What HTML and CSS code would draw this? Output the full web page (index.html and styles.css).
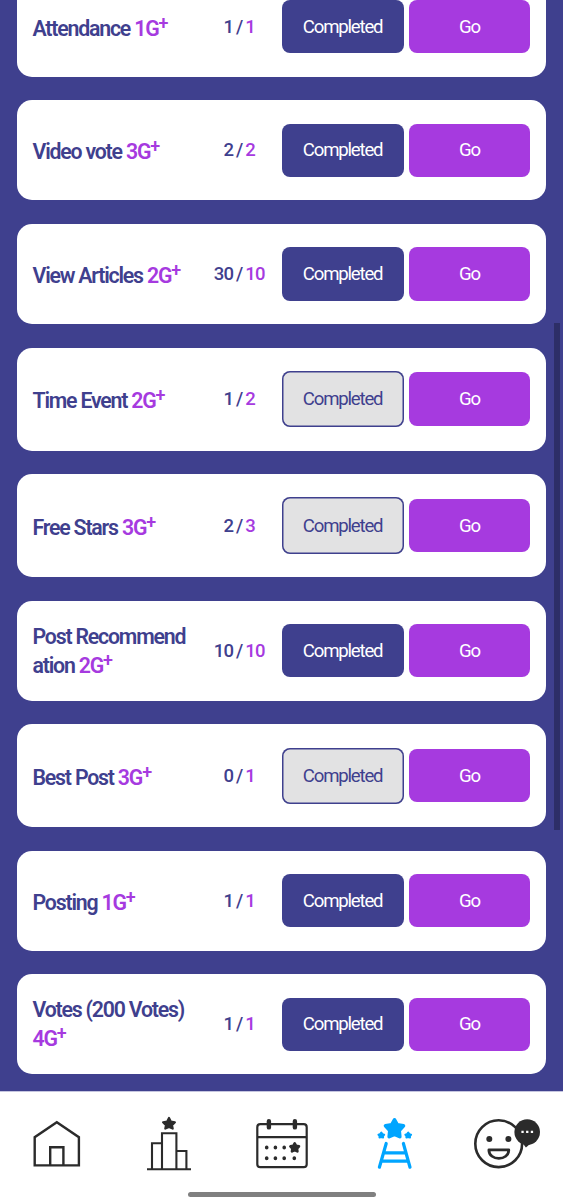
FILE: index.html
```html
<!DOCTYPE html>
<html lang="en">
<head>
    <meta charset="UTF-8">
    <meta name="viewport" content="width=device-width, initial-scale=1.0">
    <title>Missions</title>
    <link rel="stylesheet" href="styles.css">
</head>
<body>
    <main class="missions">
        <div class="card">
            <div class="title">Attendance <span class="point">1G<sup>+</sup></span></div>
            <div class="count">1 / <span class="point">1</span></div>
            <button class="button done">Completed</button>
            <button class="button go">Go</button>
        </div>
        <div class="card">
            <div class="title">Video vote <span class="point">3G<sup>+</sup></span></div>
            <div class="count">2 / <span class="point">2</span></div>
            <button class="button done">Completed</button>
            <button class="button go">Go</button>
        </div>
        <div class="card">
            <div class="title">View Articles <span class="point">2G<sup>+</sup></span></div>
            <div class="count">30 / <span class="point">10</span></div>
            <button class="button done">Completed</button>
            <button class="button go">Go</button>
        </div>
        <div class="card">
            <div class="title">Time Event <span class="point">2G<sup>+</sup></span></div>
            <div class="count">1 / <span class="point">2</span></div>
            <button class="button pending">Completed</button>
            <button class="button go">Go</button>
        </div>
        <div class="card">
            <div class="title">Free Stars <span class="point">3G<sup>+</sup></span></div>
            <div class="count">2 / <span class="point">3</span></div>
            <button class="button pending">Completed</button>
            <button class="button go">Go</button>
        </div>
        <div class="card">
            <div class="title wrapped">Post Recommend<br>ation <span class="point">2G<sup>+</sup></span></div>
            <div class="count">10 / <span class="point">10</span></div>
            <button class="button done">Completed</button>
            <button class="button go">Go</button>
        </div>
        <div class="card">
            <div class="title">Best Post <span class="point">3G<sup>+</sup></span></div>
            <div class="count">0 / <span class="point">1</span></div>
            <button class="button pending">Completed</button>
            <button class="button go">Go</button>
        </div>
        <div class="card">
            <div class="title">Posting <span class="point">1G<sup>+</sup></span></div>
            <div class="count">1 / <span class="point">1</span></div>
            <button class="button done">Completed</button>
            <button class="button go">Go</button>
        </div>
        <div class="card">
            <div class="title wrapped">Votes (200 Votes)<br><span class="point">4G<sup>+</sup></span></div>
            <div class="count">1 / <span class="point">1</span></div>
            <button class="button done">Completed</button>
            <button class="button go">Go</button>
        </div>
    </main>
    <div class="scrollbar"></div>

    <nav class="tabbar">
        <div class="tabs">
            <a class="tab">
                <svg width="80" height="60" viewBox="17 1112 80 60" fill="none" stroke="#2b2b2b" stroke-width="2.4">
                    <path d="M34.7 1165.4V1137.2L56.8 1122.3L78.9 1137.2V1165.4Z"/>
                    <path d="M50.2 1165V1147.2H63.4V1165"/>
                </svg>
            </a>
            <a class="tab">
                <svg width="80" height="60" viewBox="130 1112 80 60" fill="none" stroke="#2b2b2b" stroke-width="2.1">
                    <path d="M147 1169.3H191M152 1169V1143.2H162M162 1169V1133.2H176.4V1169M176.4 1151H186.4V1169"/>
                    <path class="star" stroke-width="2.2" d="M169 1118L170.9 1121.7L174.9 1122.3L172 1125.2L172.7 1128.6L169 1127.1L165.3 1128.6L166 1125.2L163.1 1122.3L167.1 1121.7Z"/>
                </svg>
            </a>
            <a class="tab">
                <svg width="80" height="60" viewBox="242 1112 80 60" fill="none" stroke="#2b2b2b" stroke-width="2.2">
                    <rect x="257.3" y="1124.2" width="49.4" height="43" rx="3"/>
                    <path d="M257 1137.1H307"/>
                    <path stroke-width="4.4" stroke-linecap="round" d="M268.9 1121.2V1127.4M294.9 1121.2V1127.4"/>
                    <path stroke-width="3.6" stroke-linecap="round" d="M266.7 1147.4v.4M275.4 1147.4v.4M284.2 1147.4v.4M266.7 1158v.4M275.4 1158v.4M284.2 1158v.4M294.3 1158v.4"/>
                    <path class="star" stroke-width="2.6" d="M294.7 1143.3L296.1 1145.9L299 1146.4L297 1148.5L297.4 1151.4L294.7 1150.1L292 1151.4L292.4 1148.5L290.4 1146.4L293.3 1145.9Z"/>
                </svg>
            </a>
            <a class="tab active">
                <svg width="80" height="60" viewBox="355 1112 80 60" fill="none" stroke="#00a5ff" stroke-width="3.2">
                    <path stroke-linecap="round" d="M386.2 1143.5L379.4 1167.2M403.4 1143.5L410 1167.2M384.5 1152.9H405M382 1161.2H407.5"/>
                    <path class="star" stroke-width="3.6" d="M394.5 1119.8L397.3 1124.9L403.5 1125.8L399.2 1130.5L399.8 1136.7L394.5 1134.4L389.2 1136.7L389.8 1130.5L385.5 1125.8L391.7 1124.9Z"/>
                    <path class="star" stroke-width="2" d="M381.3 1132.6L382.5 1134.2L384.2 1134.7L383 1136.2L383.1 1137.6L381.3 1137.1L379.5 1137.6L379.6 1136.2L378.4 1134.7L380.1 1134.2Z"/>
                    <path class="star" stroke-width="2" d="M408.2 1132.6L409.4 1134.2L411.1 1134.7L409.9 1136.2L410 1137.6L408.2 1137.1L406.4 1137.6L406.5 1136.2L405.3 1134.7L407 1134.2Z"/>
                </svg>
            </a>
            <a class="tab">
                <svg width="80" height="60" viewBox="467 1112 80 60" fill="none" stroke="#2b2b2b" stroke-width="2.6">
                    <circle cx="498.7" cy="1143.7" r="23.4"/>
                    <circle cx="489.3" cy="1138.9" r="3" fill="#2b2b2b" stroke="none"/>
                    <circle cx="508.4" cy="1138.9" r="3" fill="#2b2b2b" stroke="none"/>
                    <path stroke-width="2.8" stroke-linejoin="round" d="M488.9 1149.9H508.8C508.8 1161.2 488.9 1161.2 488.9 1149.9Z"/>
                    <path fill="#2b2b2b" stroke="none" d="M522.5 1143L525.9 1147.4L531.2 1143Z"/>
                    <circle cx="527.2" cy="1132.1" r="12.8" fill="#2b2b2b" stroke="none"/>
                    <path stroke="#fff" stroke-dasharray="2.3 2.4" stroke-width="2.2" d="M521.4 1131.9H533.4"/>
                </svg>
            </a>
        </div>
        <div class="home-bar"></div>
    </nav>
</body>
</html>
```

FILE: styles.css
```css
* {
    box-sizing: border-box;
}
body {
    display: flex;
    flex-direction: column;
    height: 1200px;
    margin: 0;
    overflow: hidden;
    background-color: #3f408e;
    color: #3f408e;
    font-family: Roboto, 'Liberation Sans', sans-serif;
}
.missions {
    display: flex;
    flex-direction: column;
    justify-content: flex-end;
    gap: 23.6px;
    height: 1091px;
    padding: 0 17px 16.7px;
    overflow: hidden;
}
.card {
    display: flex;
    flex-shrink: 0;
    align-items: center;
    padding: 23.4px 15.6px 23.4px 15.5px;
    border-radius: 15px;
    background-color: #fff;
}
.title {
    width: 164.4px;
    margin: -4px 0;
    padding-top: 3px;
    font-size: 21.3px;
    font-weight: 600;
    line-height: 29px;
    letter-spacing: -1.2px;
    white-space: nowrap;
}
.title.wrapped {
    padding-top: 0;
}
.title sup {
    position: relative;
    top: -7px;
    font-size: 18px;
    line-height: 0;
    vertical-align: baseline;
}
.count {
    width: 85px;
    font-size: 18.5px;
    font-weight: 500;
    letter-spacing: -0.8px;
    word-spacing: -1px;
    text-align: center;
}
.point {
    color: #a63adf;
}
.button {
    width: 122px;
    height: 53.2px;
    padding: 0;
    border: none;
    border-radius: 8px;
    color: #fff;
    font-family: inherit;
    font-size: 18.6px;
    letter-spacing: -1.2px;
}
.button.done {
    background-color: #3f408e;
}
.button.pending {
    height: 56.2px;
    background-color: #e2e2e3;
    box-shadow: inset 0 0 0 1.5px #3f408e;
    color: #3f408e;
}
.button.go {
    margin-left: 5px;
    background-color: #a63adf;
}
.scrollbar {
    position: absolute;
    top: 323px;
    right: 3px;
    width: 6px;
    height: 507px;
    background-color: #2d2e67;
}
.tabbar {
    flex: 1;
    border-top: 1px solid #c5c5df;
    background-color: #fff;
}
.tabs {
    display: flex;
    justify-content: space-between;
    padding: 20px 16px 0 17px;
}
.tab svg {
    display: block;
}
.star {
    fill: #2b2b2b;
    stroke-linejoin: round;
}
.active .star {
    fill: #00a5ff;
}
.home-bar {
    width: 188px;
    height: 5px;
    margin: 20px auto 0;
    border-radius: 3px;
    background-color: #808080;
}
```
